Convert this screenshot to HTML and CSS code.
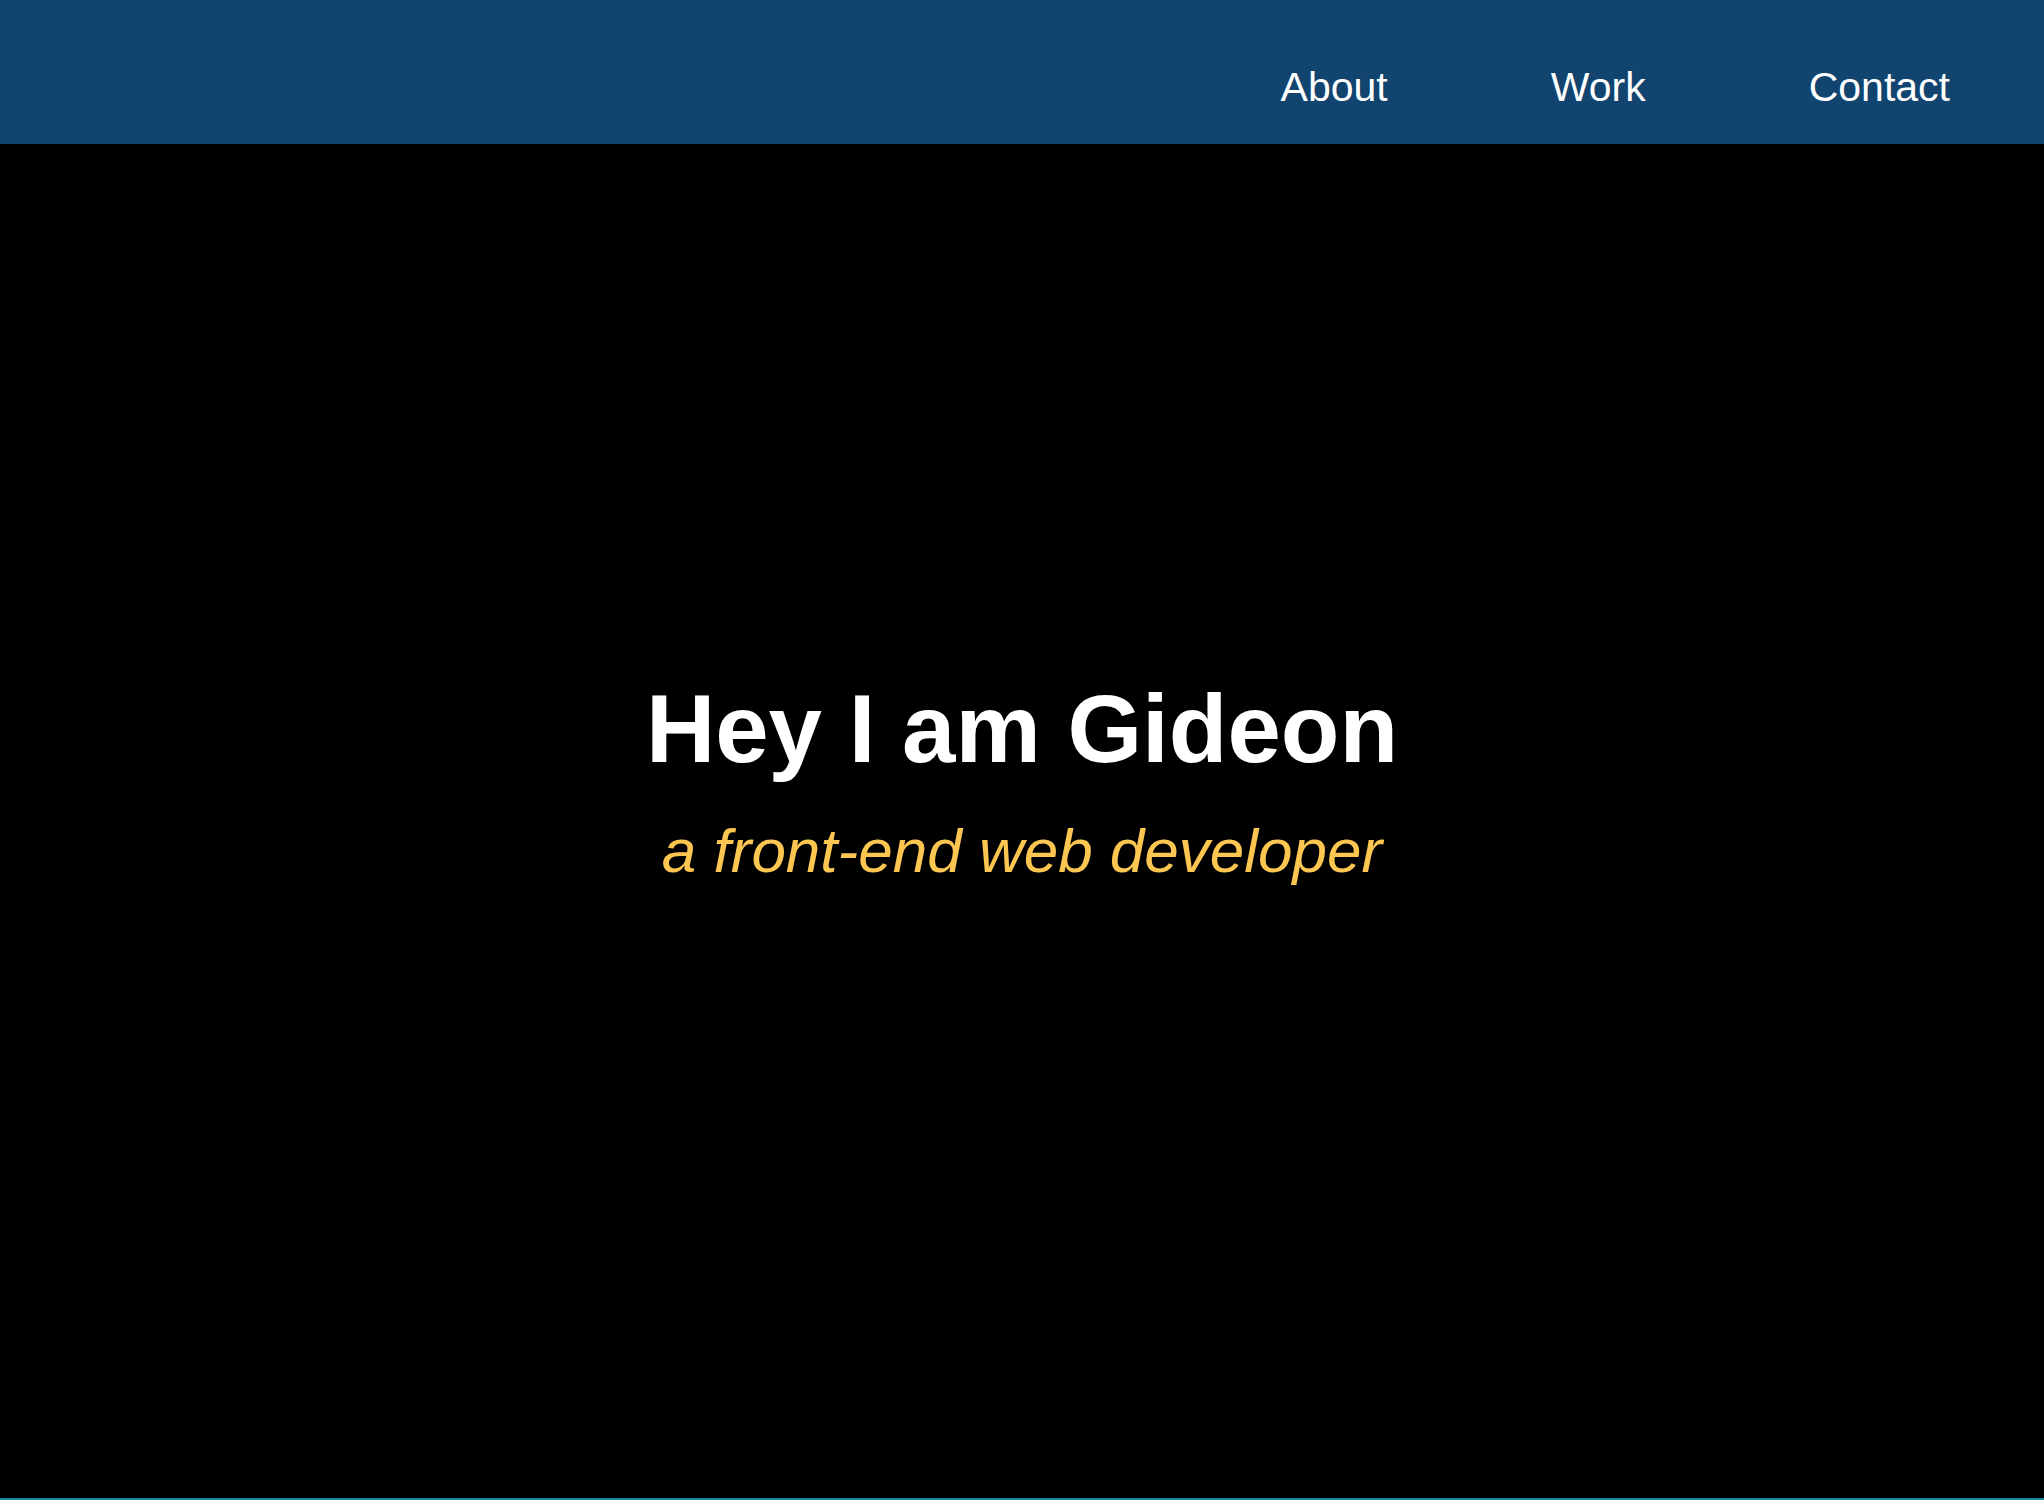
FILE: index.html
```html
<!DOCTYPE html>
<html lang="en">
<head>
<meta charset="utf-8">
<title>Gideon</title>
<link rel="stylesheet" href="styles.css">
</head>
<body>
<header class="site-header">
  <nav class="nav">
    <a class="nav-link" href="#about">About</a>
    <a class="nav-link" href="#work">Work</a>
    <a class="nav-link" href="#contact">Contact</a>
  </nav>
</header>
<main class="hero">
  <h1 class="hero-title">Hey I am Gideon</h1>
  <p class="hero-subtitle">a front-end web developer</p>
</main>
</body>
</html>
```

FILE: styles.css
```css
html, body {
  margin: 0;
  padding: 0;
}
body {
  background: #000;
  font-family: "Liberation Sans", Arial, Helvetica, sans-serif;
  height: 1500px;
  overflow: hidden;
}
.site-header {
  box-sizing: border-box;
  height: 144px;
  background: #11446f;
  display: flex;
  justify-content: flex-end;
  align-items: flex-start;
  padding: 67px 94px 0 0;
}
.nav {
  display: flex;
  gap: 163px;
}
.nav-link {
  color: #fff;
  text-decoration: none;
  font-size: 41px;
  line-height: 1;
}
.hero {
  box-sizing: border-box;
  height: 1356px;
  border-bottom: 2px solid #1b8aa8;
  display: flex;
  flex-direction: column;
  align-items: center;
  padding-top: 537px;
}
.hero-title {
  margin: 0;
  color: #fff;
  font-size: 96px;
  font-weight: 700;
  line-height: 1;
}
.hero-subtitle {
  margin: 43px 0 0;
  color: #fcc650;
  font-size: 62px;
  font-style: italic;
  font-weight: 400;
  line-height: 1;
}
```
